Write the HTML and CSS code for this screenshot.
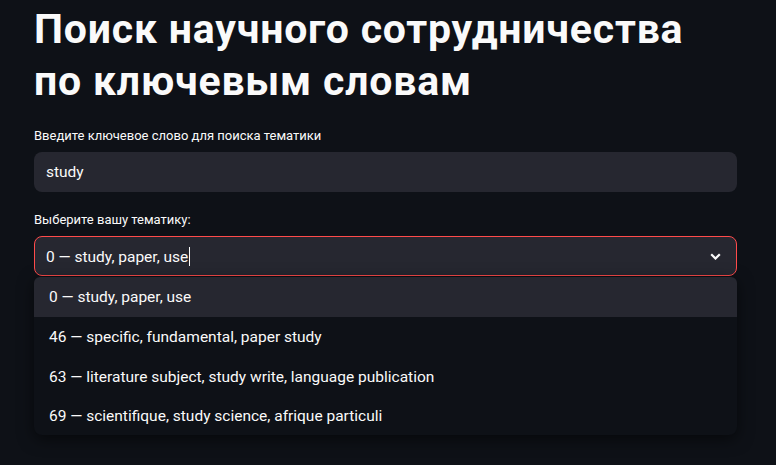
FILE: index.html
```html
<!DOCTYPE html>
<html lang="ru">
<head>
<meta charset="utf-8">
<link rel="stylesheet" href="styles.css">
</head>
<body>
<main class="page">
  <h1 class="title">Поиск научного сотрудничества по ключевым словам</h1>
  <div class="field">
    <label class="label">Введите ключевое слово для поиска тематики</label>
    <div class="input">study</div>
  </div>
  <div class="field">
    <label class="label">Выберите вашу тематику:</label>
    <div class="select-wrap">
      <div class="select">
        <span class="value">0 — study, paper, use<span class="caret"></span></span>
        <svg class="chev" width="11" height="7" viewBox="0 0 11 7"><path d="M1.2 1.2 L5.5 5.5 L9.8 1.2" fill="none" stroke="#fafafa" stroke-width="2.2"/></svg>
      </div>
      <ul class="menu">
        <li class="opt active">0 — study, paper, use</li>
        <li class="opt">46 — specific, fundamental, paper study</li>
        <li class="opt">63 — literature subject, study write, language publication</li>
        <li class="opt">69 — scientifique, study science, afrique particuli</li>
      </ul>
    </div>
  </div>
</main>
</body>
</html>
```
FILE: styles.css
```css
html, body { margin: 0; padding: 0; }
body {
  background: #0e1117;
  color: #fafafa;
  font-family: Roboto, "Noto Sans", sans-serif;
  width: 776px;
  height: 465px;
  overflow: hidden;
}
.page { padding: 0 39px 0 34px; }
.title {
  margin: 0;
  padding-top: 3px;
  font-size: 41px;
  font-weight: 700;
  line-height: 52px;
  letter-spacing: 0.8px;
  color: #fafafa;
  max-width: 696px;
}
.field { margin-top: 20px; }
.field + .field { margin-top: 19px; }
.label {
  display: block;
  font-size: 13px;
  line-height: 18px;
  margin-bottom: 7px;
  color: #fafafa;
}
.input {
  height: 40px;
  background: #262730;
  border-radius: 8px;
  padding: 0 12px;
  display: flex;
  align-items: center;
  font-size: 15.5px;
}
.select-wrap { position: relative; }
.select {
  height: 38px;
  background: #262730;
  border: 1px solid #ff4b4b;
  border-radius: 8px;
  padding: 0 15px 0 11px;
  display: flex;
  align-items: center;
  justify-content: space-between;
  font-size: 15.5px;
}
.caret {
  display: inline-block;
  width: 1px;
  height: 19px;
  background: #fafafa;
  vertical-align: -4px;
  margin-left: 1px;
}
.menu {
  position: absolute;
  left: 0;
  right: 0;
  top: 41px;
  margin: 0;
  padding: 0;
  list-style: none;
  background: #0e1117;
  border-radius: 6px 6px 8px 8px;
  box-shadow: 0 4px 16px rgba(0,0,0,0.55);
  z-index: 2;
}
.opt {
  height: 40px;
  display: flex;
  align-items: center;
  padding: 0 15px;
  font-size: 15.5px;
}
.opt:last-child { height: 38px; }
.opt.active { background: #262730; border-radius: 6px 6px 0 0; }
```
